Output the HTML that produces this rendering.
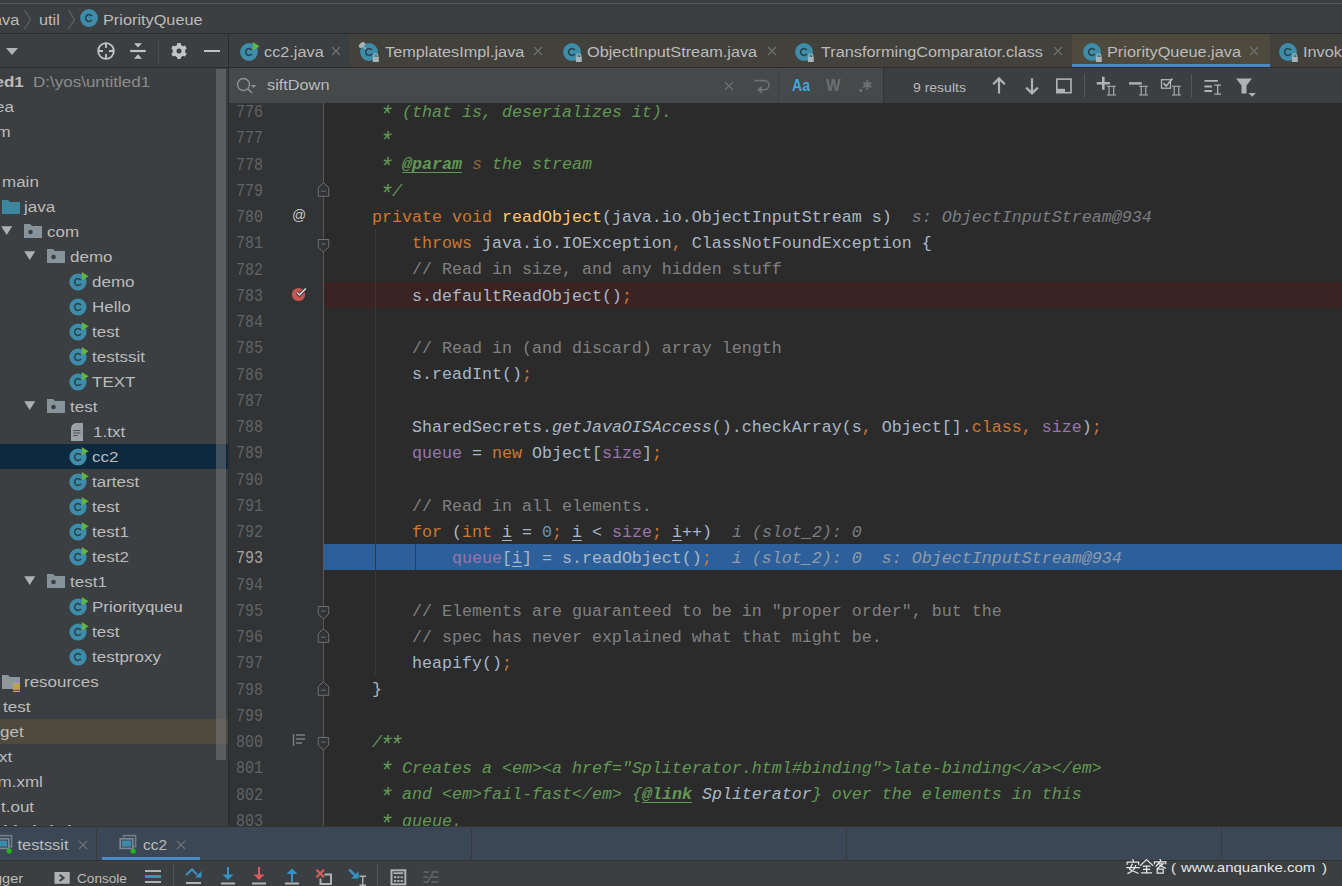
<!DOCTYPE html><html><head><meta charset="utf-8"><style>
html,body{margin:0;padding:0}
body{width:1342px;height:886px;overflow:hidden;position:relative;background:#3C3F41;font-family:"Liberation Sans",sans-serif}
.a{position:absolute}
.t{white-space:pre;line-height:1}
.ast{display:inline-block;width:10px;transform:translate(-0.8px,4.4px) scale(1.38)}
.code{font-family:"Liberation Mono",monospace;font-size:16.67px;white-space:pre;line-height:26.25px}
</style></head><body><div class="a" style="left:0px;top:3px;width:1342px;height:1px;background:#555555;"></div><div class="a" style="left:0px;top:33px;width:1342px;height:1px;background:#2B2B2B;"></div><div class="a t" style="left:-7px;top:11.20px;font-size:16.3px;color:#BBBBBB;font-family:'Liberation Sans', sans-serif;transform:scaleY(0.91);transform-origin:0 13.80px;">ava</div><svg class="a" style="left:23px;top:9px" width="10" height="21" viewBox="0 0 10 21"><path d="M1.5 1 L7.5 10.5 L1.5 20" fill="none" stroke="#5E6366" stroke-width="1.2"/></svg><div class="a t" style="left:39px;top:11.20px;font-size:16.3px;color:#BBBBBB;font-family:'Liberation Sans', sans-serif;transform:scaleY(0.91);transform-origin:0 13.80px;">util</div><svg class="a" style="left:67px;top:9px" width="10" height="21" viewBox="0 0 10 21"><path d="M1.5 1 L7.5 10.5 L1.5 20" fill="none" stroke="#5E6366" stroke-width="1.2"/></svg><svg class="a" style="left:79px;top:8px" width="21" height="21" viewBox="0 0 21 21"><circle cx="10" cy="10" r="8.9" fill="#3D8CAA"/><path d="M12.9 8.2 A3.4 3.4 0 1 0 12.9 11.8" fill="none" stroke="#2C4049" stroke-width="1.5"/></svg><div class="a t" style="left:103px;top:11.20px;font-size:16.3px;color:#BBBBBB;font-family:'Liberation Sans', sans-serif;transform:scaleY(0.91);transform-origin:0 13.80px;">PriorityQueue</div><div class="a" style="left:0px;top:67px;width:228px;height:1px;background:#2B2B2B;"></div><svg class="a" style="left:4px;top:46px" width="16" height="10" viewBox="0 0 16 10"><path d="M2 2 L14 2 L8 9 Z" fill="#AFB1B3"/></svg><svg class="a" style="left:96px;top:41px" width="20" height="20" viewBox="0 0 20 20"><circle cx="10" cy="10" r="7.8" fill="none" stroke="#C2C3C4" stroke-width="1.8"/><path d="M10 2.2V7M10 13V17.8M2.2 10H7M13 10H17.8" stroke="#C2C3C4" stroke-width="1.8"/></svg><svg class="a" style="left:129px;top:41px" width="18" height="20" viewBox="0 0 18 20"><path d="M1.2 10h15.5" stroke="#C2C3C4" stroke-width="2.2"/><path d="M5 2.2h8L9 6.6Z M5 17.8h8L9 13.3Z" fill="#C2C3C4"/></svg><div class="a" style="left:158px;top:40px;width:1px;height:23px;background:#4B4E50;"></div><svg class="a" style="left:169px;top:41px" width="20" height="20" viewBox="0 0 20 20"><g fill="#C2C3C4"><circle cx="10" cy="10" r="6.3"/><rect x="8.1" y="2" width="3.8" height="16" rx="0.8"/><rect x="8.1" y="2" width="3.8" height="16" rx="0.8" transform="rotate(60 10 10)"/><rect x="8.1" y="2" width="3.8" height="16" rx="0.8" transform="rotate(-60 10 10)"/></g><circle cx="10" cy="10" r="2.5" fill="#3C3F41"/></svg><div class="a" style="left:204.3px;top:49.8px;width:15.4px;height:2.4px;background:#C2C3C4"></div><div class="a" style="left:228px;top:34px;width:1px;height:793px;background:#2B2B2B;"></div><div class="a" style="left:0;top:68px;width:228px;height:758px;overflow:hidden"><div class="a t" style="left:-5.5px;top:4.61px;font-size:17px;color:#BBBBBB;font-family:'Liberation Sans', sans-serif;transform:scaleY(0.91);transform-origin:0 14.39px;font-weight:bold">ed1</div><div class="a t" style="left:33px;top:4.61px;font-size:17px;color:#8C8C8C;font-family:'Liberation Sans', sans-serif;transform:scaleY(0.91);transform-origin:0 14.39px;">D:\yos\untitled1</div><div class="a t" style="left:-5px;top:29.61px;font-size:17px;color:#BBBBBB;font-family:'Liberation Sans', sans-serif;transform:scaleY(0.91);transform-origin:0 14.39px;">ea</div><div class="a t" style="left:-3.5px;top:54.61px;font-size:17px;color:#BBBBBB;font-family:'Liberation Sans', sans-serif;transform:scaleY(0.91);transform-origin:0 14.39px;">m</div><div class="a t" style="left:0px;top:79.61px;font-size:17px;color:#BBBBBB;font-family:'Liberation Sans', sans-serif;transform:scaleY(0.91);transform-origin:0 14.39px;"></div><div class="a t" style="left:2px;top:104.61px;font-size:17px;color:#BBBBBB;font-family:'Liberation Sans', sans-serif;transform:scaleY(0.91);transform-origin:0 14.39px;">main</div><svg class="a" style="left:0px;top:129px" width="22" height="20" viewBox="0 0 22 20"><path d="M2 3h6l2 2h10v12H2Z" fill="#3E86A0"/></svg><div class="a t" style="left:24px;top:129.61px;font-size:17px;color:#BBBBBB;font-family:'Liberation Sans', sans-serif;transform:scaleY(0.91);transform-origin:0 14.39px;">java</div><svg class="a" style="left:0px;top:157px" width="14" height="12" viewBox="0 0 14 12"><path d="M1.2 1.2h11L6.7 10Z" fill="#AEB0B2"/></svg><svg class="a" style="left:22px;top:153px" width="22" height="20" viewBox="0 0 22 20"><path d="M2 3h6l2 2h10v12H2Z" fill="#87939A"/><circle cx="8.5" cy="11" r="2.3" fill="#3C3F41"/></svg><div class="a t" style="left:47px;top:154.61px;font-size:17px;color:#BBBBBB;font-family:'Liberation Sans', sans-serif;transform:scaleY(0.91);transform-origin:0 14.39px;">com</div><svg class="a" style="left:23px;top:182px" width="14" height="12" viewBox="0 0 14 12"><path d="M1.2 1.2h11L6.7 10Z" fill="#AEB0B2"/></svg><svg class="a" style="left:45px;top:178px" width="22" height="20" viewBox="0 0 22 20"><path d="M2 3h6l2 2h10v12H2Z" fill="#87939A"/><circle cx="8.5" cy="11" r="2.3" fill="#3C3F41"/></svg><div class="a t" style="left:70px;top:179.61px;font-size:17px;color:#BBBBBB;font-family:'Liberation Sans', sans-serif;transform:scaleY(0.91);transform-origin:0 14.39px;">demo</div><!--cls--><svg class="a" style="left:68px;top:204px" width="21" height="21" viewBox="0 0 21 21"><circle cx="10" cy="10" r="8.6" fill="#3D8CAA"/><path d="M12.9 8.2 A3.4 3.4 0 1 0 12.9 11.8" fill="none" stroke="#2C4049" stroke-width="1.5"/><path d="M13.7 0 L20.6 4.3 L13.9 8.6 Z" fill="#62B543"/></svg><div class="a t" style="left:92px;top:204.61px;font-size:17px;color:#BBBBBB;font-family:'Liberation Sans', sans-serif;transform:scaleY(0.91);transform-origin:0 14.39px;">demo</div><!--cls--><svg class="a" style="left:68px;top:229px" width="21" height="21" viewBox="0 0 21 21"><circle cx="10" cy="10" r="8.6" fill="#3D8CAA"/><path d="M12.9 8.2 A3.4 3.4 0 1 0 12.9 11.8" fill="none" stroke="#2C4049" stroke-width="1.5"/></svg><div class="a t" style="left:92px;top:229.61px;font-size:17px;color:#BBBBBB;font-family:'Liberation Sans', sans-serif;transform:scaleY(0.91);transform-origin:0 14.39px;">Hello</div><!--cls--><svg class="a" style="left:68px;top:254px" width="21" height="21" viewBox="0 0 21 21"><circle cx="10" cy="10" r="8.6" fill="#3D8CAA"/><path d="M12.9 8.2 A3.4 3.4 0 1 0 12.9 11.8" fill="none" stroke="#2C4049" stroke-width="1.5"/><path d="M13.7 0 L20.6 4.3 L13.9 8.6 Z" fill="#62B543"/></svg><div class="a t" style="left:92px;top:254.61px;font-size:17px;color:#BBBBBB;font-family:'Liberation Sans', sans-serif;transform:scaleY(0.91);transform-origin:0 14.39px;">test</div><!--cls--><svg class="a" style="left:68px;top:279px" width="21" height="21" viewBox="0 0 21 21"><circle cx="10" cy="10" r="8.6" fill="#3D8CAA"/><path d="M12.9 8.2 A3.4 3.4 0 1 0 12.9 11.8" fill="none" stroke="#2C4049" stroke-width="1.5"/><path d="M13.7 0 L20.6 4.3 L13.9 8.6 Z" fill="#62B543"/></svg><div class="a t" style="left:92px;top:279.61px;font-size:17px;color:#BBBBBB;font-family:'Liberation Sans', sans-serif;transform:scaleY(0.91);transform-origin:0 14.39px;">testssit</div><!--cls--><svg class="a" style="left:68px;top:304px" width="21" height="21" viewBox="0 0 21 21"><circle cx="10" cy="10" r="8.6" fill="#3D8CAA"/><path d="M12.9 8.2 A3.4 3.4 0 1 0 12.9 11.8" fill="none" stroke="#2C4049" stroke-width="1.5"/><path d="M13.7 0 L20.6 4.3 L13.9 8.6 Z" fill="#62B543"/></svg><div class="a t" style="left:92px;top:304.61px;font-size:17px;color:#BBBBBB;font-family:'Liberation Sans', sans-serif;transform:scaleY(0.91);transform-origin:0 14.39px;">TEXT</div><svg class="a" style="left:23px;top:332px" width="14" height="12" viewBox="0 0 14 12"><path d="M1.2 1.2h11L6.7 10Z" fill="#AEB0B2"/></svg><svg class="a" style="left:45px;top:328px" width="22" height="20" viewBox="0 0 22 20"><path d="M2 3h6l2 2h10v12H2Z" fill="#87939A"/><circle cx="8.5" cy="11" r="2.3" fill="#3C3F41"/></svg><div class="a t" style="left:70px;top:329.61px;font-size:17px;color:#BBBBBB;font-family:'Liberation Sans', sans-serif;transform:scaleY(0.91);transform-origin:0 14.39px;">test</div><svg class="a" style="left:70px;top:354px" width="16" height="20" viewBox="0 0 16 20"><path d="M5.5 1H13V19H1V5.5Z" fill="#9AA1A6"/><path d="M1 4.5L4.5 1V4.5Z" fill="#A9AFB3"/><g stroke="#4A4E51" stroke-width="1"><path d="M3.2 8.6h7.2M3.2 11h7.2M3.2 13.6h4.8"/></g></svg><div class="a t" style="left:93px;top:354.61px;font-size:17px;color:#BBBBBB;font-family:'Liberation Sans', sans-serif;transform:scaleY(0.91);transform-origin:0 14.39px;">1.txt</div><div class="a" style="left:0px;top:376px;width:228px;height:25px;background:#0D293E;"></div><!--cls--><svg class="a" style="left:68px;top:379px" width="21" height="21" viewBox="0 0 21 21"><circle cx="10" cy="10" r="8.6" fill="#3D8CAA"/><path d="M12.9 8.2 A3.4 3.4 0 1 0 12.9 11.8" fill="none" stroke="#2C4049" stroke-width="1.5"/><path d="M13.7 0 L20.6 4.3 L13.9 8.6 Z" fill="#62B543"/></svg><div class="a t" style="left:92px;top:379.61px;font-size:17px;color:#BBBBBB;font-family:'Liberation Sans', sans-serif;transform:scaleY(0.91);transform-origin:0 14.39px;">cc2</div><!--cls--><svg class="a" style="left:68px;top:404px" width="21" height="21" viewBox="0 0 21 21"><circle cx="10" cy="10" r="8.6" fill="#3D8CAA"/><path d="M12.9 8.2 A3.4 3.4 0 1 0 12.9 11.8" fill="none" stroke="#2C4049" stroke-width="1.5"/><path d="M13.7 0 L20.6 4.3 L13.9 8.6 Z" fill="#62B543"/></svg><div class="a t" style="left:92px;top:404.61px;font-size:17px;color:#BBBBBB;font-family:'Liberation Sans', sans-serif;transform:scaleY(0.91);transform-origin:0 14.39px;">tartest</div><!--cls--><svg class="a" style="left:68px;top:429px" width="21" height="21" viewBox="0 0 21 21"><circle cx="10" cy="10" r="8.6" fill="#3D8CAA"/><path d="M12.9 8.2 A3.4 3.4 0 1 0 12.9 11.8" fill="none" stroke="#2C4049" stroke-width="1.5"/><path d="M13.7 0 L20.6 4.3 L13.9 8.6 Z" fill="#62B543"/></svg><div class="a t" style="left:92px;top:429.61px;font-size:17px;color:#BBBBBB;font-family:'Liberation Sans', sans-serif;transform:scaleY(0.91);transform-origin:0 14.39px;">test</div><!--cls--><svg class="a" style="left:68px;top:454px" width="21" height="21" viewBox="0 0 21 21"><circle cx="10" cy="10" r="8.6" fill="#3D8CAA"/><path d="M12.9 8.2 A3.4 3.4 0 1 0 12.9 11.8" fill="none" stroke="#2C4049" stroke-width="1.5"/><path d="M13.7 0 L20.6 4.3 L13.9 8.6 Z" fill="#62B543"/></svg><div class="a t" style="left:92px;top:454.61px;font-size:17px;color:#BBBBBB;font-family:'Liberation Sans', sans-serif;transform:scaleY(0.91);transform-origin:0 14.39px;">test1</div><!--cls--><svg class="a" style="left:68px;top:479px" width="21" height="21" viewBox="0 0 21 21"><circle cx="10" cy="10" r="8.6" fill="#3D8CAA"/><path d="M12.9 8.2 A3.4 3.4 0 1 0 12.9 11.8" fill="none" stroke="#2C4049" stroke-width="1.5"/><path d="M13.7 0 L20.6 4.3 L13.9 8.6 Z" fill="#62B543"/></svg><div class="a t" style="left:92px;top:479.61px;font-size:17px;color:#BBBBBB;font-family:'Liberation Sans', sans-serif;transform:scaleY(0.91);transform-origin:0 14.39px;">test2</div><svg class="a" style="left:23px;top:507px" width="14" height="12" viewBox="0 0 14 12"><path d="M1.2 1.2h11L6.7 10Z" fill="#AEB0B2"/></svg><svg class="a" style="left:45px;top:503px" width="22" height="20" viewBox="0 0 22 20"><path d="M2 3h6l2 2h10v12H2Z" fill="#87939A"/><circle cx="8.5" cy="11" r="2.3" fill="#3C3F41"/></svg><div class="a t" style="left:70px;top:504.61px;font-size:17px;color:#BBBBBB;font-family:'Liberation Sans', sans-serif;transform:scaleY(0.91);transform-origin:0 14.39px;">test1</div><!--cls--><svg class="a" style="left:68px;top:529px" width="21" height="21" viewBox="0 0 21 21"><circle cx="10" cy="10" r="8.6" fill="#3D8CAA"/><path d="M12.9 8.2 A3.4 3.4 0 1 0 12.9 11.8" fill="none" stroke="#2C4049" stroke-width="1.5"/><path d="M13.7 0 L20.6 4.3 L13.9 8.6 Z" fill="#62B543"/></svg><div class="a t" style="left:92px;top:529.61px;font-size:17px;color:#BBBBBB;font-family:'Liberation Sans', sans-serif;transform:scaleY(0.91);transform-origin:0 14.39px;">Priorityqueu</div><!--cls--><svg class="a" style="left:68px;top:554px" width="21" height="21" viewBox="0 0 21 21"><circle cx="10" cy="10" r="8.6" fill="#3D8CAA"/><path d="M12.9 8.2 A3.4 3.4 0 1 0 12.9 11.8" fill="none" stroke="#2C4049" stroke-width="1.5"/><path d="M13.7 0 L20.6 4.3 L13.9 8.6 Z" fill="#62B543"/></svg><div class="a t" style="left:92px;top:554.61px;font-size:17px;color:#BBBBBB;font-family:'Liberation Sans', sans-serif;transform:scaleY(0.91);transform-origin:0 14.39px;">test</div><!--cls--><svg class="a" style="left:68px;top:579px" width="21" height="21" viewBox="0 0 21 21"><circle cx="10" cy="10" r="8.6" fill="#3D8CAA"/><path d="M12.9 8.2 A3.4 3.4 0 1 0 12.9 11.8" fill="none" stroke="#2C4049" stroke-width="1.5"/></svg><div class="a t" style="left:92px;top:579.61px;font-size:17px;color:#BBBBBB;font-family:'Liberation Sans', sans-serif;transform:scaleY(0.91);transform-origin:0 14.39px;">testproxy</div><svg class="a" style="left:0px;top:604px" width="22" height="20" viewBox="0 0 22 20"><path d="M2 3h6l2 2h10v12H2Z" fill="#8E979C"/><g stroke="#D9A343" stroke-width="1.3"><path d="M13 12h7M13 14.5h7M13 17h7M13 19.5h7"/></g></svg><div class="a t" style="left:24px;top:604.61px;font-size:17px;color:#BBBBBB;font-family:'Liberation Sans', sans-serif;transform:scaleY(0.91);transform-origin:0 14.39px;">resources</div><div class="a t" style="left:3px;top:629.61px;font-size:17px;color:#BBBBBB;font-family:'Liberation Sans', sans-serif;transform:scaleY(0.91);transform-origin:0 14.39px;">test</div><div class="a" style="left:0px;top:651px;width:228px;height:25px;background:#4E4A3E;"></div><div class="a t" style="left:0px;top:654.61px;font-size:17px;color:#BBBBBB;font-family:'Liberation Sans', sans-serif;transform:scaleY(0.91);transform-origin:0 14.39px;">get</div><div class="a t" style="left:-1px;top:679.61px;font-size:17px;color:#BBBBBB;font-family:'Liberation Sans', sans-serif;transform:scaleY(0.91);transform-origin:0 14.39px;">xt</div><div class="a t" style="left:-2.5px;top:704.61px;font-size:17px;color:#BBBBBB;font-family:'Liberation Sans', sans-serif;transform:scaleY(0.91);transform-origin:0 14.39px;">m.xml</div><div class="a t" style="left:1px;top:729.61px;font-size:17px;color:#BBBBBB;font-family:'Liberation Sans', sans-serif;transform:scaleY(0.91);transform-origin:0 14.39px;">t.out</div><div class="a" style="left:4px;top:756.5px;width:2.5px;height:1.5px;background:#9FA3A6;"></div><div class="a" style="left:14px;top:756.5px;width:2.5px;height:1.5px;background:#9FA3A6;"></div><div class="a" style="left:33px;top:756.5px;width:2.5px;height:1.5px;background:#9FA3A6;"></div><div class="a" style="left:50px;top:756.5px;width:2.5px;height:1.5px;background:#9FA3A6;"></div><div class="a" style="left:68px;top:756.5px;width:2.5px;height:1.5px;background:#9FA3A6;"></div><div class="a" style="left:216px;top:1px;width:10px;height:691px;background:rgba(128,128,128,0.45);"></div></div><div class="a" style="left:229px;top:34px;width:120px;height:33px;background:#3C3F41;"></div><div class="a" style="left:349px;top:34px;width:723px;height:33px;background:#42413B;"></div><div class="a" style="left:1072px;top:34px;width:198px;height:33px;background:#4E4A3E;"></div><div class="a" style="left:1270px;top:34px;width:72px;height:33px;background:#42413B;"></div><div class="a" style="left:229px;top:67px;width:1113px;height:1px;background:#2B2B2B;"></div><div class="a" style="left:1072px;top:64px;width:198px;height:3px;background:#4A88C7;"></div><svg class="a" style="left:239px;top:42px" width="21" height="21" viewBox="0 0 21 21"><circle cx="10" cy="10" r="8.9" fill="#3D8CAA"/><path d="M12.9 8.2 A3.4 3.4 0 1 0 12.9 11.8" fill="none" stroke="#2C4049" stroke-width="1.5"/><path d="M13.7 0 L20.6 4.3 L13.9 8.6 Z" fill="#62B543"/></svg><div class="a t" style="left:264px;top:42.70px;font-size:16.3px;color:#BBBBBB;font-family:'Liberation Sans', sans-serif;transform:scaleY(0.91);transform-origin:0 13.80px;">cc2.java</div><svg class="a" style="left:331px;top:46px" width="10" height="10" viewBox="0 0 10 10"><path d="M1 1L9 9M9 1L1 9" stroke="#6E7173" stroke-width="1.2"/></svg><svg class="a" style="left:359px;top:42px" width="21" height="21" viewBox="0 0 21 21"><circle cx="10" cy="10" r="8.9" fill="#3D8CAA"/><path d="M12.9 8.2 A3.4 3.4 0 1 0 12.9 11.8" fill="none" stroke="#2C4049" stroke-width="1.5"/><path d="M14.8 15.2 v-1.5 a2 2 0 0 1 4 0 v1.5" fill="none" stroke="#A8B2B9" stroke-width="1.1"/><rect x="13.8" y="15" width="6" height="5" fill="#A8B2B9"/></svg><div class="a t" style="left:385px;top:42.70px;font-size:16.3px;color:#BBBBBB;font-family:'Liberation Sans', sans-serif;transform:scaleY(0.91);transform-origin:0 13.80px;">TemplatesImpl.java</div><svg class="a" style="left:533px;top:46px" width="10" height="10" viewBox="0 0 10 10"><path d="M1 1L9 9M9 1L1 9" stroke="#6E7173" stroke-width="1.2"/></svg><svg class="a" style="left:562px;top:42px" width="21" height="21" viewBox="0 0 21 21"><circle cx="10" cy="10" r="8.9" fill="#3D8CAA"/><path d="M12.9 8.2 A3.4 3.4 0 1 0 12.9 11.8" fill="none" stroke="#2C4049" stroke-width="1.5"/><path d="M14.8 15.2 v-1.5 a2 2 0 0 1 4 0 v1.5" fill="none" stroke="#A8B2B9" stroke-width="1.1"/><rect x="13.8" y="15" width="6" height="5" fill="#A8B2B9"/></svg><div class="a t" style="left:587px;top:42.70px;font-size:16.3px;color:#BBBBBB;font-family:'Liberation Sans', sans-serif;transform:scaleY(0.91);transform-origin:0 13.80px;">ObjectInputStream.java</div><svg class="a" style="left:767px;top:46px" width="10" height="10" viewBox="0 0 10 10"><path d="M1 1L9 9M9 1L1 9" stroke="#6E7173" stroke-width="1.2"/></svg><svg class="a" style="left:794px;top:42px" width="21" height="21" viewBox="0 0 21 21"><circle cx="10" cy="10" r="8.9" fill="#3D8CAA"/><path d="M12.9 8.2 A3.4 3.4 0 1 0 12.9 11.8" fill="none" stroke="#2C4049" stroke-width="1.5"/><path d="M14.8 15.2 v-1.5 a2 2 0 0 1 4 0 v1.5" fill="none" stroke="#A8B2B9" stroke-width="1.1"/><rect x="13.8" y="15" width="6" height="5" fill="#A8B2B9"/></svg><div class="a t" style="left:821px;top:42.70px;font-size:16.3px;color:#BBBBBB;font-family:'Liberation Sans', sans-serif;transform:scaleY(0.91);transform-origin:0 13.80px;">TransformingComparator.class</div><svg class="a" style="left:1053px;top:46px" width="10" height="10" viewBox="0 0 10 10"><path d="M1 1L9 9M9 1L1 9" stroke="#6E7173" stroke-width="1.2"/></svg><svg class="a" style="left:1082px;top:42px" width="21" height="21" viewBox="0 0 21 21"><circle cx="10" cy="10" r="8.9" fill="#3D8CAA"/><path d="M12.9 8.2 A3.4 3.4 0 1 0 12.9 11.8" fill="none" stroke="#2C4049" stroke-width="1.5"/><path d="M14.8 15.2 v-1.5 a2 2 0 0 1 4 0 v1.5" fill="none" stroke="#A8B2B9" stroke-width="1.1"/><rect x="13.8" y="15" width="6" height="5" fill="#A8B2B9"/></svg><div class="a t" style="left:1107px;top:42.70px;font-size:16.3px;color:#BBBBBB;font-family:'Liberation Sans', sans-serif;transform:scaleY(0.91);transform-origin:0 13.80px;">PriorityQueue.java</div><svg class="a" style="left:1249px;top:46px" width="10" height="10" viewBox="0 0 10 10"><path d="M1 1L9 9M9 1L1 9" stroke="#6E7173" stroke-width="1.2"/></svg><svg class="a" style="left:1278px;top:42px" width="21" height="21" viewBox="0 0 21 21"><circle cx="10" cy="10" r="8.9" fill="#3D8CAA"/><path d="M12.9 8.2 A3.4 3.4 0 1 0 12.9 11.8" fill="none" stroke="#2C4049" stroke-width="1.5"/><path d="M14.8 15.2 v-1.5 a2 2 0 0 1 4 0 v1.5" fill="none" stroke="#A8B2B9" stroke-width="1.1"/><rect x="13.8" y="15" width="6" height="5" fill="#A8B2B9"/></svg><div class="a t" style="left:1303px;top:42.70px;font-size:16.3px;color:#BBBBBB;font-family:'Liberation Sans', sans-serif;transform:scaleY(0.91);transform-origin:0 13.80px;">Invok</div><svg class="a" style="left:357px;top:41px" width="12" height="12" viewBox="0 0 12 12"><ellipse cx="5" cy="4" rx="3.6" ry="2.3" transform="rotate(-40 5 4)" fill="#A8B2B9"/><path d="M6.8 6L8.8 8" stroke="#A8B2B9" stroke-width="1.2"/></svg><div class="a" style="left:229px;top:68px;width:654px;height:35px;background:#45494A;"></div><div class="a" style="left:883px;top:68px;width:1px;height:35px;background:#323232;"></div><svg class="a" style="left:235px;top:76px" width="26" height="20" viewBox="0 0 26 20"><circle cx="8.5" cy="8.5" r="6" fill="none" stroke="#8E9295" stroke-width="1.4"/><path d="M12.8 12.8L17 17" stroke="#8E9295" stroke-width="1.6"/><path d="M15.8 9h5.4l-2.7 3Z" fill="#8E9295"/></svg><div class="a t" style="left:267px;top:76.20px;font-size:16.3px;color:#BBBBBB;font-family:'Liberation Sans', sans-serif;transform:scaleY(0.91);transform-origin:0 13.80px;">siftDown</div><svg class="a" style="left:724px;top:81px" width="10" height="10" viewBox="0 0 10 10"><path d="M1 1L9 9M9 1L1 9" stroke="#6E7173" stroke-width="1.2"/></svg><svg class="a" style="left:750px;top:70px" width="130" height="33" viewBox="0 0 130 33"><path d="M4.3 10.6H14.5A4.6 4.6 0 0 1 14.5 19.8H10.5" fill="none" stroke="#6E7173" stroke-width="1.6"/><path d="M7 19.8L12 15.8V23.8Z" fill="#6E7173"/><rect x="28" y="1.5" width="1" height="30.5" fill="#3D4042"/><rect x="109.4" y="19" width="2.6" height="3" fill="#6B7074"/><path d="M117.3 10.2V19.4M113.3 12.6L121.3 17M113.3 17L121.3 12.6" stroke="#6B7074" stroke-width="2"/></svg><div class="a t" style="left:792px;top:77.98px;font-size:16.8px;color:#3FA7DB;font-family:'Liberation Sans', sans-serif;font-weight:bold;transform:scaleX(0.84);transform-origin:0 0">Aa</div><div class="a t" style="left:825.5px;top:77.98px;font-size:16.8px;color:#6B7074;font-family:'Liberation Sans', sans-serif;font-weight:bold;transform:scaleX(0.92);transform-origin:0 0">W</div><div class="a t" style="left:913px;top:80.15px;font-size:14px;color:#BBBBBB;font-family:'Liberation Sans', sans-serif;transform:scaleY(0.91);transform-origin:0 11.85px;">9 results</div><svg class="a" style="left:980px;top:70px" width="290" height="32" viewBox="0 0 290 32"><g fill="none" stroke="#B0B2B4"><path d="M19 8.8V23.5M13.2 14.2L19 8.4L24.8 14.2" stroke-width="2.2"/><path d="M52 8.3V23M46.2 17.6L52 23.4L57.8 17.6" stroke-width="2.2"/><rect x="76.8" y="9.1" width="14.2" height="13.6" stroke-width="1.6"/><path d="M123.3 6.8V19.8M116.8 13.3H129.9" stroke-width="2.6"/><path d="M126.7 16.2h9.3M126.7 25h9.3M129 16.2V25M133.7 16.2V25" stroke-width="1.1"/><path d="M149 13.4H161.8" stroke-width="2.4"/><path d="M159 16.2h9M159 25h9M161.2 16.2V25M165.8 16.2V25" stroke-width="1.1"/><rect x="181.5" y="9.7" width="9" height="8.5" stroke-width="1.3"/><path d="M183.5 13.2L186.2 16L192.5 8.5" stroke-width="1.7"/><path d="M192 16.2h9M192 25h9M194.2 16.2V25M198.8 16.2V25" stroke-width="1.1"/><path d="M224.4 10.9H238M224.4 16.5H232M224.4 21H232" stroke-width="1.8"/><path d="M234.4 15.2h6.6M234.4 24.2h6.6M237.7 15.2V24.2" stroke-width="1.3"/></g><g fill="#B0B2B4"><rect x="77" y="18.8" width="8" height="4.2"/><path d="M256 8.4H272L266.5 15.5V23.5H261.5V15.5Z"/><path d="M268.5 23H275.8L272.2 26.8Z"/></g><rect x="104" y="4" width="1" height="23.6" fill="#55585A"/><rect x="211" y="4" width="1" height="23.6" fill="#55585A"/></svg><div class="a" style="left:229px;top:103px;width:94px;height:723px;background:#313335;"></div><div class="a" style="left:323px;top:103px;width:1px;height:723px;background:#555555;"></div><div class="a" style="left:324px;top:103px;width:1018px;height:723px;background:#2B2B2B;"></div><div class="a" style="left:229px;top:103px;width:1113px;height:723px;overflow:hidden"><div class="a" style="left:95px;top:178.5px;width:1018px;height:26.25px;background:#3A2323;"></div><div class="a" style="left:95px;top:441.0px;width:1018px;height:26.25px;background:#2D5F9A;"></div><div class="a" style="left:94px;top:0px;width:1px;height:723px;background:#555555;"></div><div class="a" style="left:146px;top:126.0px;width:1px;height:446.25px;background:#393939;"></div><div class="a" style="left:186px;top:441.0px;width:1px;height:26.25px;background:#1E3F66;"></div><div class="a t" style="left:7px;top:1.05px;font-family:'Liberation Mono', monospace;font-size:15px;color:#606366;line-height:15px;transform:scaleY(1.2);transform-origin:0 0">776</div><div class="a t" style="left:7px;top:27.30px;font-family:'Liberation Mono', monospace;font-size:15px;color:#606366;line-height:15px;transform:scaleY(1.2);transform-origin:0 0">777</div><div class="a t" style="left:7px;top:53.55px;font-family:'Liberation Mono', monospace;font-size:15px;color:#606366;line-height:15px;transform:scaleY(1.2);transform-origin:0 0">778</div><div class="a t" style="left:7px;top:79.80px;font-family:'Liberation Mono', monospace;font-size:15px;color:#606366;line-height:15px;transform:scaleY(1.2);transform-origin:0 0">779</div><div class="a t" style="left:7px;top:106.05px;font-family:'Liberation Mono', monospace;font-size:15px;color:#606366;line-height:15px;transform:scaleY(1.2);transform-origin:0 0">780</div><div class="a t" style="left:7px;top:132.30px;font-family:'Liberation Mono', monospace;font-size:15px;color:#606366;line-height:15px;transform:scaleY(1.2);transform-origin:0 0">781</div><div class="a t" style="left:7px;top:158.55px;font-family:'Liberation Mono', monospace;font-size:15px;color:#606366;line-height:15px;transform:scaleY(1.2);transform-origin:0 0">782</div><div class="a t" style="left:7px;top:184.80px;font-family:'Liberation Mono', monospace;font-size:15px;color:#606366;line-height:15px;transform:scaleY(1.2);transform-origin:0 0">783</div><div class="a t" style="left:7px;top:211.05px;font-family:'Liberation Mono', monospace;font-size:15px;color:#606366;line-height:15px;transform:scaleY(1.2);transform-origin:0 0">784</div><div class="a t" style="left:7px;top:237.30px;font-family:'Liberation Mono', monospace;font-size:15px;color:#606366;line-height:15px;transform:scaleY(1.2);transform-origin:0 0">785</div><div class="a t" style="left:7px;top:263.55px;font-family:'Liberation Mono', monospace;font-size:15px;color:#606366;line-height:15px;transform:scaleY(1.2);transform-origin:0 0">786</div><div class="a t" style="left:7px;top:289.80px;font-family:'Liberation Mono', monospace;font-size:15px;color:#606366;line-height:15px;transform:scaleY(1.2);transform-origin:0 0">787</div><div class="a t" style="left:7px;top:316.05px;font-family:'Liberation Mono', monospace;font-size:15px;color:#606366;line-height:15px;transform:scaleY(1.2);transform-origin:0 0">788</div><div class="a t" style="left:7px;top:342.30px;font-family:'Liberation Mono', monospace;font-size:15px;color:#606366;line-height:15px;transform:scaleY(1.2);transform-origin:0 0">789</div><div class="a t" style="left:7px;top:368.55px;font-family:'Liberation Mono', monospace;font-size:15px;color:#606366;line-height:15px;transform:scaleY(1.2);transform-origin:0 0">790</div><div class="a t" style="left:7px;top:394.80px;font-family:'Liberation Mono', monospace;font-size:15px;color:#606366;line-height:15px;transform:scaleY(1.2);transform-origin:0 0">791</div><div class="a t" style="left:7px;top:421.05px;font-family:'Liberation Mono', monospace;font-size:15px;color:#606366;line-height:15px;transform:scaleY(1.2);transform-origin:0 0">792</div><div class="a t" style="left:7px;top:447.30px;font-family:'Liberation Mono', monospace;font-size:15px;color:#A4A3A3;line-height:15px;transform:scaleY(1.2);transform-origin:0 0">793</div><div class="a t" style="left:7px;top:473.55px;font-family:'Liberation Mono', monospace;font-size:15px;color:#606366;line-height:15px;transform:scaleY(1.2);transform-origin:0 0">794</div><div class="a t" style="left:7px;top:499.80px;font-family:'Liberation Mono', monospace;font-size:15px;color:#606366;line-height:15px;transform:scaleY(1.2);transform-origin:0 0">795</div><div class="a t" style="left:7px;top:526.05px;font-family:'Liberation Mono', monospace;font-size:15px;color:#606366;line-height:15px;transform:scaleY(1.2);transform-origin:0 0">796</div><div class="a t" style="left:7px;top:552.30px;font-family:'Liberation Mono', monospace;font-size:15px;color:#606366;line-height:15px;transform:scaleY(1.2);transform-origin:0 0">797</div><div class="a t" style="left:7px;top:578.55px;font-family:'Liberation Mono', monospace;font-size:15px;color:#606366;line-height:15px;transform:scaleY(1.2);transform-origin:0 0">798</div><div class="a t" style="left:7px;top:604.80px;font-family:'Liberation Mono', monospace;font-size:15px;color:#606366;line-height:15px;transform:scaleY(1.2);transform-origin:0 0">799</div><div class="a t" style="left:7px;top:631.05px;font-family:'Liberation Mono', monospace;font-size:15px;color:#606366;line-height:15px;transform:scaleY(1.2);transform-origin:0 0">800</div><div class="a t" style="left:7px;top:657.30px;font-family:'Liberation Mono', monospace;font-size:15px;color:#606366;line-height:15px;transform:scaleY(1.2);transform-origin:0 0">801</div><div class="a t" style="left:7px;top:683.55px;font-family:'Liberation Mono', monospace;font-size:15px;color:#606366;line-height:15px;transform:scaleY(1.2);transform-origin:0 0">802</div><div class="a t" style="left:7px;top:709.80px;font-family:'Liberation Mono', monospace;font-size:15px;color:#606366;line-height:15px;transform:scaleY(1.2);transform-origin:0 0">803</div><div class="a code" style="left:103px;top:-3.25px"><span style="color:#629755;font-style:italic">     <span class="ast">*</span> (that is, deserializes it).</span></div><div class="a code" style="left:103px;top:23.00px"><span style="color:#629755;font-style:italic">     <span class="ast">*</span></span></div><div class="a code" style="left:103px;top:49.25px"><span style="color:#629755;font-style:italic">     <span class="ast">*</span> </span><span style="color:#629755;font-style:italic;font-weight:bold;text-decoration:underline;text-underline-offset:3px">@param</span><span style="color:#629755;"> </span><span style="color:#8A653B;font-style:italic">s</span><span style="color:#629755;font-style:italic"> the stream</span></div><div class="a code" style="left:103px;top:75.50px"><span style="color:#629755;font-style:italic">     <span class="ast">*</span>/</span></div><div class="a code" style="left:103px;top:101.75px"><span style="color:#CC7832;">    private void </span><span style="color:#FFC66D;">readObject</span><span style="color:#A9B7C6;">(java.io.ObjectInputStream s)</span><span style="color:#7A7D82;font-style:italic">  s: ObjectInputStream@934</span></div><div class="a code" style="left:103px;top:128.00px"><span style="color:#CC7832;">        throws </span><span style="color:#A9B7C6;">java.io.IOException</span><span style="color:#CC7832;">, </span><span style="color:#A9B7C6;">ClassNotFoundException {</span></div><div class="a code" style="left:103px;top:154.25px"><span style="color:#808080;">        // Read in size, and any hidden stuff</span></div><div class="a code" style="left:103px;top:180.50px"><span style="color:#A9B7C6;">        s.defaultReadObject()</span><span style="color:#CC7832;">;</span></div><div class="a code" style="left:103px;top:206.75px"></div><div class="a code" style="left:103px;top:233.00px"><span style="color:#808080;">        // Read in (and discard) array length</span></div><div class="a code" style="left:103px;top:259.25px"><span style="color:#A9B7C6;">        s.readInt()</span><span style="color:#CC7832;">;</span></div><div class="a code" style="left:103px;top:285.50px"></div><div class="a code" style="left:103px;top:311.75px"><span style="color:#A9B7C6;">        SharedSecrets.</span><span style="color:#A9B7C6;font-style:italic">getJavaOISAccess</span><span style="color:#A9B7C6;">().checkArray(s</span><span style="color:#CC7832;">, </span><span style="color:#A9B7C6;">Object[].</span><span style="color:#CC7832;">class, </span><span style="color:#9876AA;">size</span><span style="color:#A9B7C6;">)</span><span style="color:#CC7832;">;</span></div><div class="a code" style="left:103px;top:338.00px"><span style="color:#9876AA;">        queue</span><span style="color:#A9B7C6;"> = </span><span style="color:#CC7832;">new </span><span style="color:#A9B7C6;">Object[</span><span style="color:#9876AA;">size</span><span style="color:#A9B7C6;">]</span><span style="color:#CC7832;">;</span></div><div class="a code" style="left:103px;top:364.25px"></div><div class="a code" style="left:103px;top:390.50px"><span style="color:#808080;">        // Read in all elements.</span></div><div class="a code" style="left:103px;top:416.75px"><span style="color:#CC7832;">        for </span><span style="color:#A9B7C6;">(</span><span style="color:#CC7832;">int </span><span style="color:#A9B7C6;text-decoration:underline;text-underline-offset:3px">i</span><span style="color:#A9B7C6;"> = </span><span style="color:#6897BB;">0</span><span style="color:#CC7832;">; </span><span style="color:#A9B7C6;text-decoration:underline;text-underline-offset:3px">i</span><span style="color:#A9B7C6;"> &lt; </span><span style="color:#9876AA;">size</span><span style="color:#CC7832;">; </span><span style="color:#A9B7C6;text-decoration:underline;text-underline-offset:3px">i</span><span style="color:#A9B7C6;">++)</span><span style="color:#7A7D82;font-style:italic">  i (slot_2): 0</span></div><div class="a code" style="left:103px;top:443.00px"><span style="color:#9876AA;">            queue</span><span style="color:#A9B7C6;">[</span><span style="color:#A9B7C6;text-decoration:underline;text-underline-offset:3px">i</span><span style="color:#A9B7C6;">] = s.readObject()</span><span style="color:#CC7832;">;</span><span style="color:#8E9BAA;font-style:italic">  i (slot_2): 0  s: ObjectInputStream@934</span></div><div class="a code" style="left:103px;top:469.25px"></div><div class="a code" style="left:103px;top:495.50px"><span style="color:#808080;">        // Elements are guaranteed to be in &quot;proper order&quot;, but the</span></div><div class="a code" style="left:103px;top:521.75px"><span style="color:#808080;">        // spec has never explained what that might be.</span></div><div class="a code" style="left:103px;top:548.00px"><span style="color:#A9B7C6;">        heapify()</span><span style="color:#CC7832;">;</span></div><div class="a code" style="left:103px;top:574.25px"><span style="color:#A9B7C6;">    }</span></div><div class="a code" style="left:103px;top:600.50px"></div><div class="a code" style="left:103px;top:626.75px"><span style="color:#629755;font-style:italic">    /<span class="ast">*</span><span class="ast">*</span></span></div><div class="a code" style="left:103px;top:653.00px"><span style="color:#629755;font-style:italic">     <span class="ast">*</span> Creates a </span><span style="color:#629755;font-style:italic">&lt;em&gt;&lt;a href=&quot;Spliterator.html#binding&quot;&gt;</span><span style="color:#629755;font-style:italic">late-binding</span><span style="color:#629755;font-style:italic">&lt;/a&gt;&lt;/em&gt;</span></div><div class="a code" style="left:103px;top:679.25px"><span style="color:#629755;font-style:italic">     <span class="ast">*</span> and </span><span style="color:#629755;font-style:italic">&lt;em&gt;</span><span style="color:#629755;font-style:italic">fail-fast</span><span style="color:#629755;font-style:italic">&lt;/em&gt;</span><span style="color:#629755;font-style:italic"> {</span><span style="color:#629755;font-style:italic;font-weight:bold;text-decoration:underline;text-underline-offset:3px">@link</span><span style="color:#629755;"> </span><span style="color:#A9B7C6;font-style:italic">Spliterator</span><span style="color:#629755;font-style:italic">}</span><span style="color:#629755;font-style:italic"> over the elements in this</span></div><div class="a code" style="left:103px;top:705.50px"><span style="color:#629755;font-style:italic">     <span class="ast">*</span> queue.</span></div></div><div class="a t" style="left:292px;top:207.52px;font-size:14px;color:#C8C8C8;font-family:'Liberation Sans', sans-serif;">@</div><svg class="a" style="left:289px;top:283px" width="20" height="20" viewBox="0 0 20 20"><circle cx="9.5" cy="11.5" r="6.6" fill="#C75450"/><path d="M8 9.5l2.6 2.4L16.8 5.5" fill="none" stroke="#313335" stroke-width="3.4"/><path d="M8 9.5l2.6 2.4L16.8 5.5" fill="none" stroke="#D4D4D4" stroke-width="1.7"/></svg><svg class="a" style="left:290.5px;top:732px" width="16" height="16" viewBox="0 0 16 16"><path d="M2.5 2v12" stroke="#7C7F82" stroke-width="1.4"/><path d="M5 3h9M5 7h9M5 11h6" stroke="#7C7F82" stroke-width="1.6"/></svg><svg class="a" style="left:317px;top:181px" width="13" height="17" viewBox="0 0 13 17"><path d="M1.25 6.5L6.5 1.8L11.75 6.5V15.3H1.25Z" fill="#313335" stroke="#6E7073" stroke-width="1"/><path d="M4.25 10.2h4.5" stroke="#6E7073" stroke-width="1"/></svg><svg class="a" style="left:317px;top:238px" width="13" height="16" viewBox="0 0 13 16"><path d="M1.25 1.5H11.75V9L6.5 14L1.25 9Z" fill="#313335" stroke="#6E7073" stroke-width="1"/><path d="M4.25 6h4.5" stroke="#6E7073" stroke-width="1"/></svg><svg class="a" style="left:317px;top:605px" width="13" height="16" viewBox="0 0 13 16"><path d="M1.25 1.5H11.75V9L6.5 14L1.25 9Z" fill="#313335" stroke="#6E7073" stroke-width="1"/><path d="M4.25 6h4.5" stroke="#6E7073" stroke-width="1"/></svg><svg class="a" style="left:317px;top:627px" width="13" height="17" viewBox="0 0 13 17"><path d="M1.25 6.5L6.5 1.8L11.75 6.5V15.3H1.25Z" fill="#313335" stroke="#6E7073" stroke-width="1"/><path d="M4.25 10.2h4.5" stroke="#6E7073" stroke-width="1"/></svg><svg class="a" style="left:317px;top:680px" width="13" height="17" viewBox="0 0 13 17"><path d="M1.25 6.5L6.5 1.8L11.75 6.5V15.3H1.25Z" fill="#313335" stroke="#6E7073" stroke-width="1"/><path d="M4.25 10.2h4.5" stroke="#6E7073" stroke-width="1"/></svg><svg class="a" style="left:317px;top:736px" width="13" height="16" viewBox="0 0 13 16"><path d="M1.25 1.5H11.75V9L6.5 14L1.25 9Z" fill="#313335" stroke="#6E7073" stroke-width="1"/><path d="M4.25 6h4.5" stroke="#6E7073" stroke-width="1"/></svg><div class="a" style="left:0px;top:826px;width:1342px;height:1px;background:#313233;"></div><div class="a" style="left:0px;top:827px;width:1342px;height:33px;background:#3C4756;"></div><div class="a" style="left:0px;top:860px;width:1342px;height:1px;background:#313233;"></div><div class="a" style="left:96px;top:826px;width:1px;height:35px;background:#393B3D;"></div><div class="a" style="left:471px;top:826px;width:1px;height:35px;background:#393B3D;"></div><div class="a" style="left:846px;top:826px;width:1px;height:35px;background:#393B3D;"></div><div class="a" style="left:1221px;top:826px;width:1px;height:35px;background:#393B3D;"></div><svg class="a" style="left:-5px;top:834px" width="22" height="20" viewBox="0 0 22 20"><path d="M4.6 3.4V1.6H16.6V12.6H14.6" fill="none" stroke="#6F7B85" stroke-width="1.6"/><rect x="1.2" y="4.8" width="12.6" height="9.6" fill="#3C4756" stroke="#7D8790" stroke-width="1.6"/><rect x="2.8" y="6.6" width="9.4" height="6" fill="#3D8AA8"/><circle cx="14.2" cy="17" r="2.6" fill="#1FB81F"/></svg><div class="a t" style="left:17.5px;top:835.92px;font-size:16.4px;color:#BBBBBB;font-family:'Liberation Sans', sans-serif;transform:scaleY(0.91);transform-origin:0 13.88px;">testssit</div><svg class="a" style="left:78px;top:840px" width="10" height="10" viewBox="0 0 10 10"><path d="M1 1L9 9M9 1L1 9" stroke="#6E7173" stroke-width="1.2"/></svg><svg class="a" style="left:119px;top:834px" width="22" height="20" viewBox="0 0 22 20"><path d="M4.6 3.4V1.6H16.6V12.6H14.6" fill="none" stroke="#6F7B85" stroke-width="1.6"/><rect x="1.2" y="4.8" width="12.6" height="9.6" fill="#3C4756" stroke="#7D8790" stroke-width="1.6"/><rect x="2.8" y="6.6" width="9.4" height="6" fill="#3D8AA8"/><circle cx="14.2" cy="17" r="2.6" fill="#1FB81F"/></svg><div class="a t" style="left:143px;top:836.68px;font-size:15.5px;color:#BBBBBB;font-family:'Liberation Sans', sans-serif;transform:scaleY(0.91);transform-origin:0 13.12px;">cc2</div><svg class="a" style="left:176px;top:840px" width="10" height="10" viewBox="0 0 10 10"><path d="M1 1L9 9M9 1L1 9" stroke="#6E7173" stroke-width="1.2"/></svg><div class="a" style="left:102px;top:857px;width:98px;height:3px;background:#4A88C7;"></div><div class="a t" style="left:-6px;top:871.23px;font-size:14.5px;color:#BBBBBB;font-family:'Liberation Sans', sans-serif;transform:scaleY(0.91);transform-origin:0 12.27px;">gger</div><svg class="a" style="left:54px;top:871px" width="16" height="14" viewBox="0 0 16 14"><rect x="0.5" y="1" width="15.2" height="11.8" fill="#AFB1B3"/><path d="M5.6 3.8L9.6 6.9L5.6 10" fill="none" stroke="#3C3F41" stroke-width="2"/></svg><div class="a t" style="left:77px;top:871.99px;font-size:13.6px;color:#BBBBBB;font-family:'Liberation Sans', sans-serif;transform:scaleY(0.91);transform-origin:0 11.51px;">Console</div><svg class="a" style="left:144px;top:868px" width="18" height="18" viewBox="0 0 18 18"><path d="M1 3h16M1 14h16" stroke="#AFB1B3" stroke-width="2"/><path d="M1 8.5h16" stroke="#3592C4" stroke-width="3"/></svg><div class="a" style="left:173px;top:864px;width:1px;height:22px;background:#515456;"></div><svg class="a" style="left:184px;top:866px" width="20" height="20" viewBox="0 0 20 20"><path d="M2 9L8 3.5L13 8.5" fill="none" stroke="#3592C4" stroke-width="2"/><path d="M11 11.5L17.5 11.5L17.5 5Z" fill="#3592C4"/><path d="M2 17h15" stroke="#AFB1B3" stroke-width="2"/></svg><svg class="a" style="left:218.5px;top:866px" width="18" height="20" viewBox="0 0 18 20"><path d="M9 1V11" stroke="#3592C4" stroke-width="2"/><path d="M3.5 8.5L9 14L14.5 8.5Z" fill="#3592C4"/><path d="M2 17.5h14" stroke="#AFB1B3" stroke-width="2"/></svg><svg class="a" style="left:249.5px;top:866px" width="18" height="20" viewBox="0 0 18 20"><path d="M9 1V11" stroke="#DB5C5C" stroke-width="2"/><path d="M3.5 8.5L9 14L14.5 8.5Z" fill="#DB5C5C"/><path d="M2 17.5h14" stroke="#AFB1B3" stroke-width="2"/></svg><svg class="a" style="left:283px;top:866px" width="18" height="20" viewBox="0 0 18 20"><path d="M9 6V16" stroke="#3592C4" stroke-width="2"/><path d="M3.5 8L9 2.5L14.5 8Z" fill="#3592C4"/><path d="M2 17.5h14" stroke="#AFB1B3" stroke-width="2"/></svg><svg class="a" style="left:305px;top:862px" width="140" height="24" viewBox="0 0 140 24"><path d="M11.5 7.8L19 15.2M19 7.8L11.5 15.2" stroke="#DB5C5C" stroke-width="2.2"/><path d="M19.5 12.5H26V22H15.5V16.5" fill="none" stroke="#AFB1B3" stroke-width="2"/><path d="M44.3 7.6L51 14.3" stroke="#3592C4" stroke-width="2.6"/><path d="M53.6 9.2V16.6H46.2Z" fill="#3592C4"/><path d="M54.5 14.2h6.5M54.5 23.2h6.5M57.7 14.2V23.2" stroke="#AFB1B3" stroke-width="1.4"/><rect x="72" y="2" width="1" height="22" fill="#515456"/><rect x="86.5" y="8.3" width="13.8" height="14" fill="none" stroke="#AFB1B3" stroke-width="2"/><g fill="#AFB1B3"><rect x="88.5" y="10.3" width="9.8" height="1.8"/><rect x="89" y="14.2" width="2.2" height="2"/><rect x="92.3" y="14.2" width="2.2" height="2"/><rect x="95.6" y="14.2" width="2.2" height="2"/><rect x="89" y="18" width="2.2" height="2"/><rect x="92.3" y="18" width="2.2" height="2"/><rect x="95.6" y="18" width="2.2" height="2"/></g><path d="M118.5 10H124M126.5 10H133.5M118.5 15H123M126.5 15H133.5M118.5 20H122M126.5 20H133.5M121.5 21.5L129.5 8.8" fill="none" stroke="#5A5D5F" stroke-width="1.8"/></svg><svg class="a" style="left:1126px;top:859px" width="44" height="16" viewBox="0 0 44 16"><g fill="none" stroke="#E6E6E6" stroke-width="1.25" stroke-linecap="square"><path d="M6.8 0.8L7.4 2M1.2 5V3H12.6V5M6.3 5.2L3.6 10.2L12 14.2M9.6 6.6Q8.8 11.5 2 14.4M0.8 8.6H13.2"/><g transform="translate(13.6 0)"><path d="M7 0.6L0.8 6.4M7 0.6L13.2 6.4M3.6 7.2H10.4M4 10.4H10M2.2 13.8H11.8M7 7.2V13.8"/></g><g transform="translate(27.2 0)"><path d="M6.8 0.4L7.4 1.6M1.2 4.6V2.8H12.6V4.6M6 3.6L3 7M5.6 4.8H10L4.2 9.6M6.8 6.6L12.4 9.2M4 10.2H10V14.2H4Z"/></g></g></svg><div class="a t" style="left:1171px;top:858.90px;font-size:15px;color:#E6E6E6;font-family:'Liberation Sans', sans-serif;transform:scaleY(0.91);transform-origin:0 12.70px;">(</div><div class="a t" style="left:1181px;top:858.90px;font-size:15px;color:#E6E6E6;font-family:'Liberation Sans', sans-serif;transform:scaleY(0.91);transform-origin:0 12.70px;">www.anquanke.com</div><div class="a t" style="left:1322px;top:858.90px;font-size:15px;color:#E6E6E6;font-family:'Liberation Sans', sans-serif;transform:scaleY(0.91);transform-origin:0 12.70px;">)</div></body></html>
